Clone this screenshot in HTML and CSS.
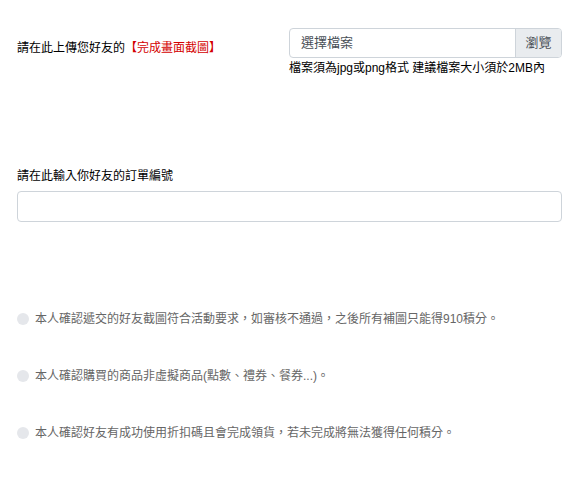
FILE: index.html
```html
<!DOCTYPE html>
<html lang="zh-Hant">
<head>
  <meta charset="UTF-8">
  <title>上傳好友截圖</title>
  <link rel="stylesheet" href="styles.css">
</head>
<body>

<div class="form">
  <div class="upload-row">
    <label class="upload-label">請在此上傳您好友的<span class="red">【完成畫面截圖】</span></label>
    <div class="upload-field">
      <div class="file-input">
        <span class="file-name">選擇檔案</span>
        <span class="file-btn">瀏覽</span>
      </div>
      <p class="hint">檔案須為jpg或png格式 建議檔案大小須於2MB內</p>
    </div>
  </div>

  <div class="order">
    <label class="order-label">請在此輸入你好友的訂單編號</label>
    <input type="text" class="text-input">
  </div>

  <ul class="checks">
    <li><span class="dot"></span>本人確認遞交的好友截圖符合活動要求，如審核不通過，之後所有補圖只能得910積分。</li>
    <li><span class="dot"></span>本人確認購買的商品非虛擬商品(點數、禮券、餐券...)。</li>
    <li><span class="dot"></span>本人確認好友有成功使用折扣碼且會完成領貨，若未完成將無法獲得任何積分。</li>
  </ul>
</div>

</body>
</html>
```

FILE: styles.css
```css
body {
  margin: 0;
  font-family: "Liberation Sans", "Noto Sans CJK TC", sans-serif;
  background: #fff;
  color: #000;
}
.form {
  padding: 28px 7px 20px 17px;
}
.upload-row {
  display: flex;
  align-items: flex-start;
}
.upload-label {
  width: 272px;
  flex-shrink: 0;
  font-size: 12px;
  line-height: 18px;
  padding-top: 11px;
}
.red {
  color: #d40000;
}
.upload-field {
  flex: 1;
}
.file-input {
  display: flex;
  height: 30px;
  border: 1px solid #ced4da;
  border-radius: 4px;
  box-sizing: border-box;
  overflow: hidden;
  font-size: 13px;
  color: #495057;
}
.file-name {
  flex: 1;
  padding-left: 11px;
  line-height: 28px;
}
.file-btn {
  width: 45px;
  text-align: center;
  background: #e9ecef;
  border-left: 1px solid #ced4da;
  line-height: 28px;
}
.hint {
  margin: 1px 0 0 0;
  font-size: 12px;
  line-height: 18px;
}
.order {
  margin-top: 90px;
}
.order-label {
  display: block;
  font-size: 12px;
  line-height: 18px;
  margin-bottom: 6px;
}
.text-input {
  display: block;
  width: 100%;
  height: 31px;
  box-sizing: border-box;
  border: 1px solid #ced4da;
  border-radius: 4px;
  padding: 0 10px;
  font-size: 13px;
}
.checks {
  list-style: none;
  margin: 88px 0 0 0;
  padding: 0;
}
.checks li {
  display: flex;
  align-items: center;
  font-size: 12px;
  line-height: 18px;
  color: #666;
  margin-bottom: 39px;
}
.dot {
  width: 12px;
  height: 12px;
  border-radius: 50%;
  background: #e5e7eb;
  margin-right: 6px;
  flex-shrink: 0;
}
```
